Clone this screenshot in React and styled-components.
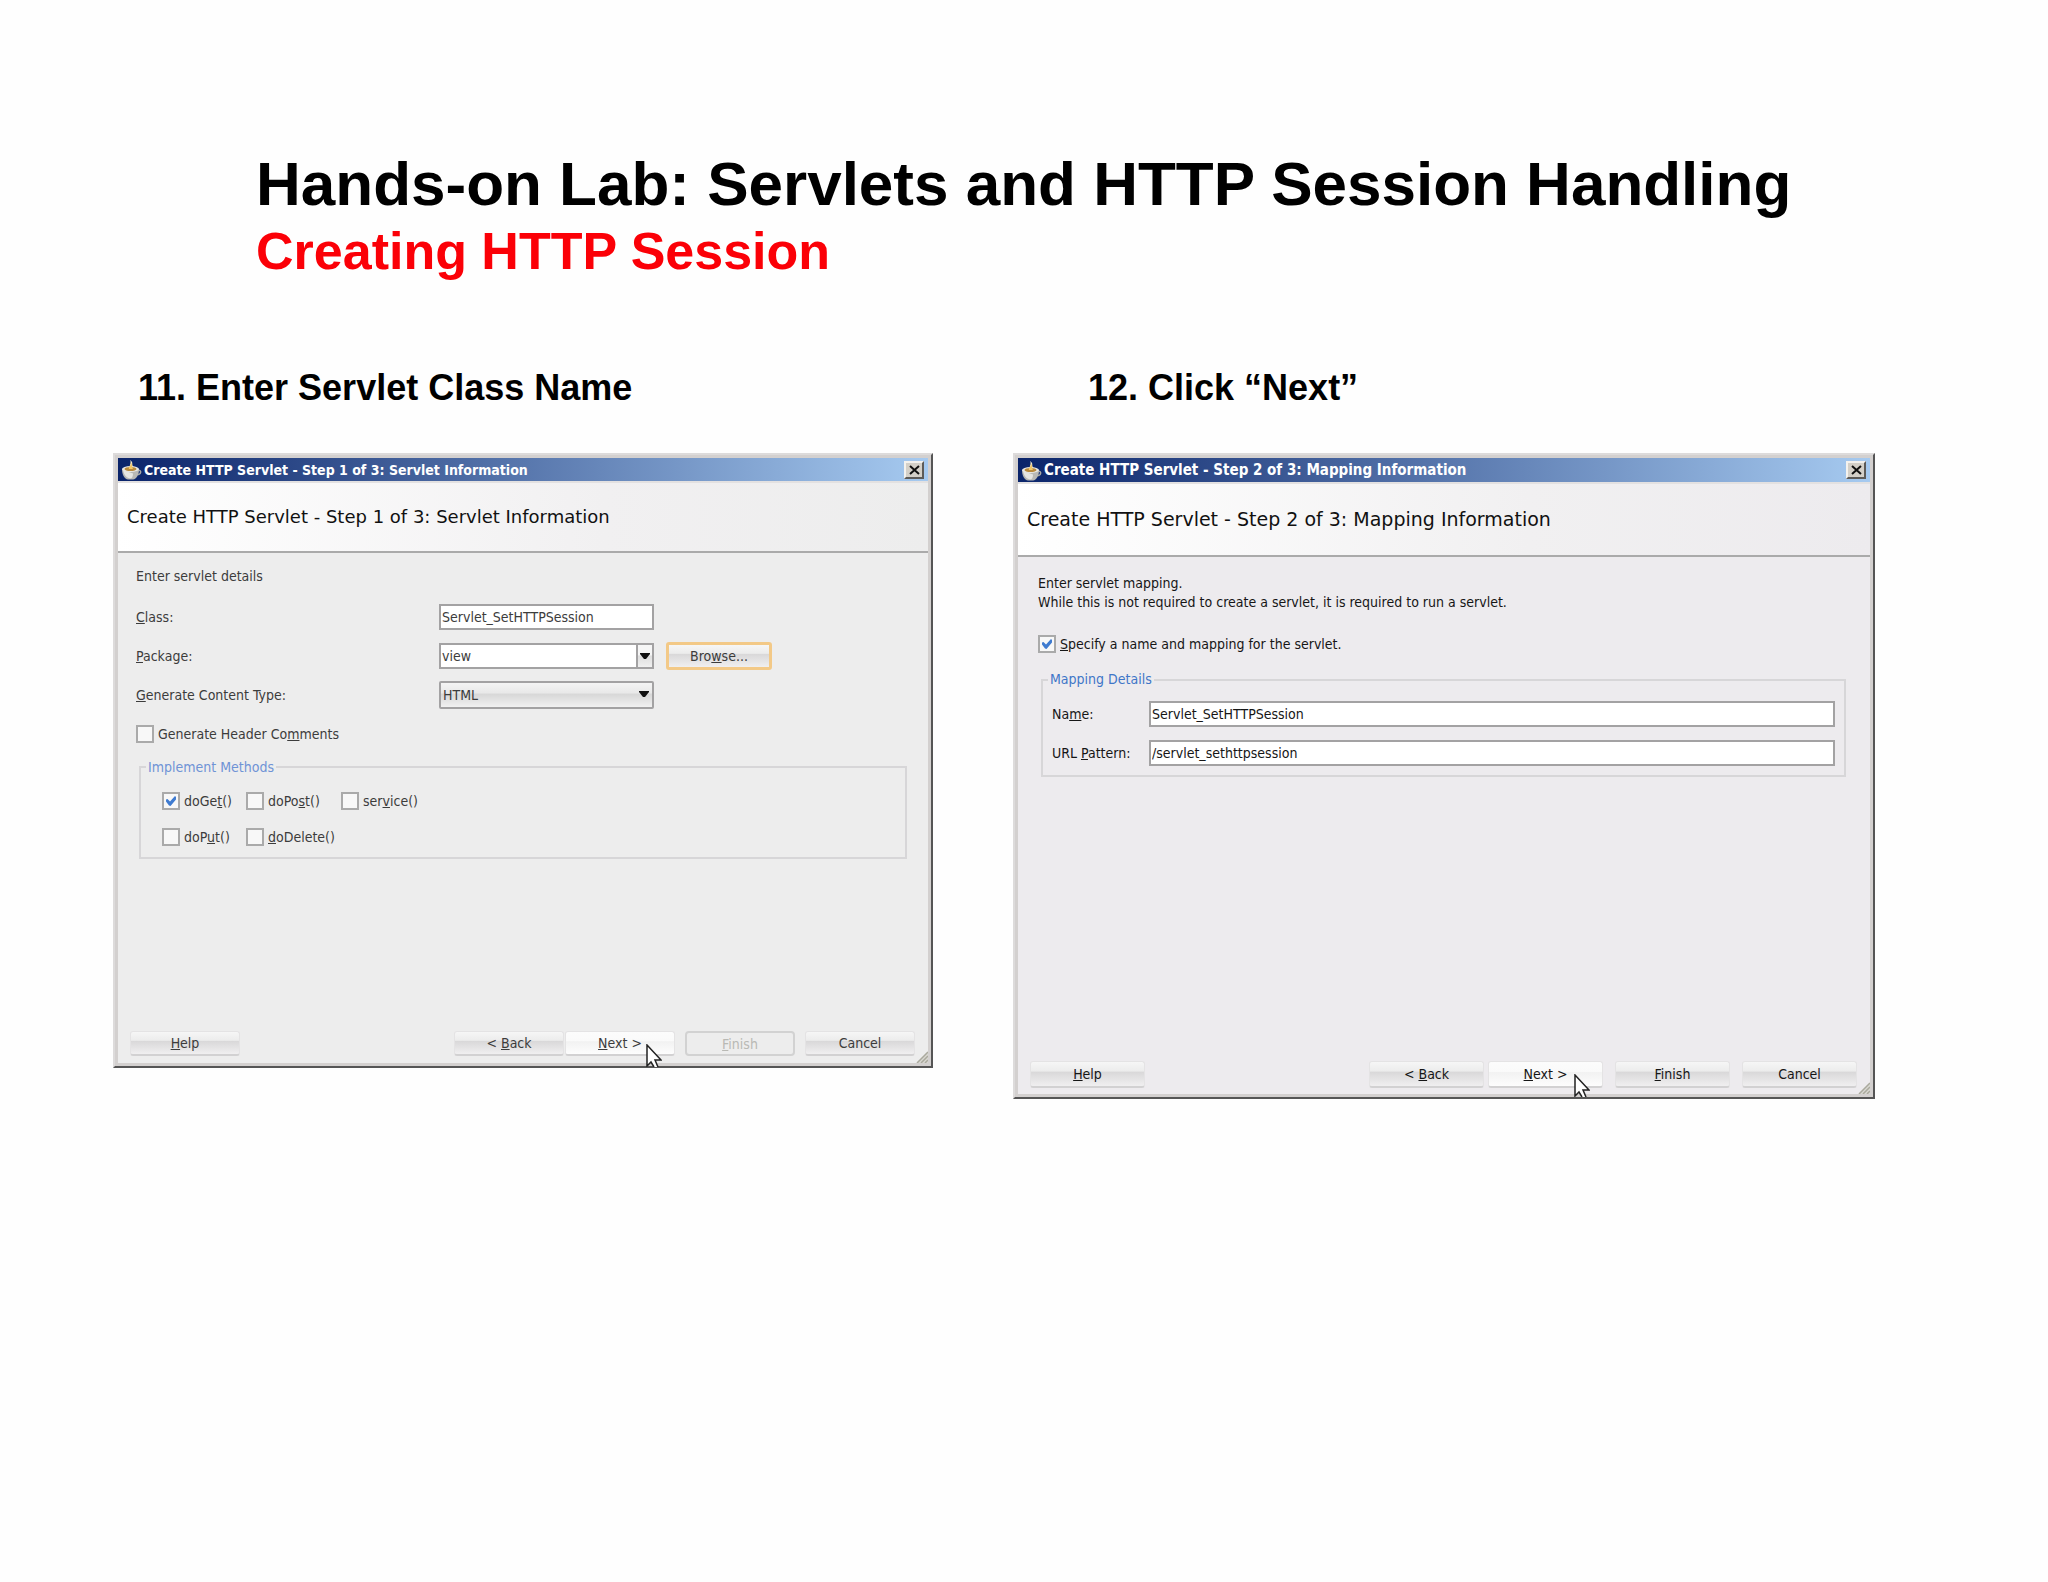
import { useId, useState } from 'react';
import styled, { createGlobalStyle, css } from 'styled-components';

const GlobalStyle = createGlobalStyle`
	* {
		box-sizing: border-box;
	}

	body {
		margin: 0;
		color: #000;
		background: #fefefe;
		font-family: "Liberation Sans", Arial, sans-serif;
	}
`;

//Slide
const StyledSlide = styled.main`
	padding: 147px 173px 147px 113px;
`;

const StyledHeading = styled.header`
	padding-left: 143px;
	margin-bottom: 86px;
`;

const StyledTitle = styled.h1`
	margin: 0;
	font-size: 62px;
	line-height: 74px;
	white-space: nowrap;
`;

const StyledSubtitle = styled.h2`
	margin: 0;
	font-size: 52px;
	line-height: 60px;
	color: #fb0007;
`;

const StyledColumns = styled.div`
	display: grid;
	grid-template-columns: 820fr 862fr;
	align-items: start;
	gap: 80px;
`;

const StyledCaption = styled.h3`
	margin: 0 0 44px;
	padding-left: ${ ({ $indent }) => $indent }px;
	font-size: 36px;
	line-height: 42px;
`;

//Window, both sizes of the dialog share these parts
const compact = css`
	--text: 14px;
	--line: 20px;
	--title: 14px;
	--heading: 18px;
	--bar: 23px;
	--banner: 72px;
	--ink: #3c3c3c;
	--legend: #6f93d6;
	--face: #ededed;
	--button-width: 110px;
	--button-height: 25px;
	min-height: 615px;
`;

const regular = css`
	--text: 14px;
	--line: 19px;
	--title: 15px;
	--heading: 19px;
	--bar: 24px;
	--banner: 75px;
	--ink: #161616;
	--legend: #3f76c8;
	--face: #edebee;
	--button-width: 115px;
	--button-height: 27px;
	min-height: 646px;
`;

const StyledWindow = styled.section`
	${ ({ $compact }) => ($compact ? compact : regular) }
	display: flex;
	flex-direction: column;
	position: relative;
	padding: 3px;
	border: 2px solid #dddbdb;
	border-right-color: #555;
	border-bottom-color: #555;
	background: #d3d0cf;
	color: var(--ink);
	font-family: "DejaVu Sans Condensed", "DejaVu Sans", sans-serif;
	font-size: var(--text);
	line-height: var(--line);
`;

const StyledTitleBar = styled.div`
	height: var(--bar);
	padding: 0 4px 0 3px;
	display: flex;
	align-items: center;
	gap: 2px;
	color: #fff;
	background: linear-gradient(to right, #0a246a, #a6caf0);
	font-size: var(--title);
	font-weight: bold;
`;

const StyledWindowName = styled.span`
	flex: 1;
	white-space: nowrap;
`;

const StyledClose = styled.button`
	width: 20px;
	height: 18px;
	padding: 0;
	display: flex;
	justify-content: center;
	align-items: center;
	border: 2px solid #f4f2ee;
	border-right-color: #5d5b58;
	border-bottom-color: #5d5b58;
	background: #d4d0c8;
`;

const StyledBanner = styled.h4`
	height: var(--banner);
	margin: 0;
	padding-left: 9px;
	display: flex;
	align-items: center;
	color: #111;
	background: linear-gradient(to right, #fff, #f1f0f1 60%, var(--face));
	border-top: 2px solid #e3e1e1;
	border-bottom: 2px solid #aaa;
	font-family: "DejaVu Sans", sans-serif;
	font-size: var(--heading);
	font-weight: normal;
`;

const StyledBody = styled.div`
	flex: 1;
	padding: ${ ({ $compact }) => ($compact ? '13px 21px 20px 18px' : '17px 24px 20px 20px') };
	background: var(--face);
`;

const StyledText = styled.p`
	margin: 0;
`;

const StyledFooter = styled.footer`
	display: flex;
	gap: ${ ({ $compact }) => ($compact ? 10 : 12) }px;
	padding: 0 13px ${ ({ $compact }) => ($compact ? 7 : 6) }px 12px;
	background: var(--face);
`;

const StyledPager = styled.div`
	margin-left: auto;
	display: flex;
	gap: ${ ({ $compact }) => ($compact ? 1 : 4) }px;
	position: relative;
`;

const StyledButton = styled.button`
	width: var(--button-width);
	height: var(--button-height);
	padding: 0;
	border: 1px solid #e4e3e4;
	border-bottom: 2px solid #d2d1d2;
	border-radius: 3px;
	color: inherit;
	background: linear-gradient(#f6f6f6, #ececec 38%, #d9d8d9 42%, #f0eff0);
	font: inherit;

	${ ({ $hot }) => $hot && css`
		background: linear-gradient(#fcfcfc, #fafafa 40%, #f2f2f2 44%, #fdfdfd);
	` }

	${ ({ $focused }) => $focused && css`
		width: 106px;
		height: 28px;
		border: 3px solid #f3c987;
	` }

	&:disabled {
		color: #b9b9b4;
		background: transparent;
		border: 2px solid #d2d2d2;
		border-radius: 4px;
	}
`;

const StyledPointer = styled.svg`
	position: absolute;
	right: 13px;
	top: 13px;
	pointer-events: none;
`;

const StyledGrip = styled.svg`
	position: absolute;
	right: 3px;
	bottom: 3px;
`;

//Form parts
const StyledServletForm = styled.div`
	margin: 17px 0 15px;
	display: grid;
	grid-template-columns: 303px 215px auto;
	grid-auto-rows: 28px;
	row-gap: 11px;
	align-items: center;
`;

const StyledMappingForm = styled.div`
	display: grid;
	grid-template-columns: 97px 1fr;
	row-gap: 13px;
	align-items: center;
`;

const StyledLabel = styled.label`
	grid-column: 1;
`;

const StyledInput = styled.input`
	width: 100%;
	height: 26px;
	padding: 0 1px;
	grid-column: 2;
	border: 2px solid #a3a2a3;
	border-radius: 0;
	color: inherit;
	background: #fff;
	font: inherit;
`;

const StyledCombo = styled.div`
	height: 26px;
	grid-column: 2;
	display: flex;
	border: 2px solid #a3a2a3;
	background: #fff;
`;

const StyledComboInput = styled.input`
	flex: 1;
	min-width: 0;
	padding: 0 1px;
	border: 0;
	color: inherit;
	background: transparent;
	font: inherit;
`;

const StyledComboButton = styled.button`
	width: 16px;
	padding: 0;
	display: flex;
	justify-content: center;
	align-items: center;
	border: 0;
	border-left: 2px solid #a3a2a3;
	background: linear-gradient(#f6f6f6 45%, #dedede 50%, #f0f0f0);
`;

const StyledSelectBox = styled.div`
	height: 28px;
	grid-column: 2;
	position: relative;

	svg {
		position: absolute;
		right: 5px;
		top: 10px;
		pointer-events: none;
	}
`;

const StyledSelect = styled.select`
	width: 100%;
	height: 100%;
	padding: 0 2px;
	appearance: none;
	border: 2px solid #a3a2a3;
	border-radius: 2px;
	color: inherit;
	background: linear-gradient(#f4f4f4, #e9e9e9 40%, #d8d8d8 48%, #f1f1f1);
	font: inherit;
`;

const StyledBrowse = styled.div`
	display: flex;
	padding-left: 12px;
`;

const StyledCheck = styled.label`
	height: 20px;
	display: flex;
	align-items: center;
	gap: 4px;
	white-space: nowrap;
`;

const StyledCheckbox = styled.input`
	width: 18px;
	height: 18px;
	margin: 0;
	display: grid;
	place-items: center;
	appearance: none;
	border: 2px solid #aaa;
	background: #f8f8f8;

	&:checked::after {
		content: "";
		width: 10px;
		height: 10px;
		background: #3f7bd0;
		clip-path: polygon(0 35%, 15% 30%, 40% 55%, 90% 0, 100% 10%, 100% 35%, 45% 100%, 30% 95%, 0 55%);
	}
`;

const StyledGroup = styled.fieldset`
	margin: ${ ({ $compact }) => ($compact ? '13px 0 0 3px' : '16px 0 0 3px') };
	padding: ${ ({ $compact }) => ($compact ? '14px 0 10px 21px' : '12px 9px 9px') };
	min-width: 0;
	border: 2px solid #d7d6d8;
`;

const StyledLegend = styled.legend`
	margin-left: ${ ({ $compact }) => ($compact ? -16 : -4) }px;
	padding: 0 2px;
	color: var(--legend);
`;

const StyledMethods = styled.div`
	display: grid;
	grid-template-columns: 84px 95px auto;
	row-gap: 16px;
`;

const StyledOptional = styled.div`
	margin-top: 22px;
`;

const CoffeeIcon = () => (
    <svg width="21" height="21" viewBox="0 0 21 21" aria-hidden="true">
        <path d="M9.500 8C7.500 6 11 5 9 1c4 2.500 1 4 3.500 7z" fill="#f2ead0"/>
        <path d="M17 11.500c4-1 3.500 4.500-1.500 4" fill="none" stroke="#a9a9a4" strokeWidth="1.500"/>
        <path d="M1 10h17c0 6-2.500 10-6 10.500H7C3.500 20 1 16 1 10z" fill="#b9b9b5"/>
        <path d="M2 11c1 5 3 7.500 7 8.500 2 0 3-2 3-5z" fill="#e6e6e2"/>
        <ellipse cx="9.500" cy="10" rx="8.500" ry="3" fill="#e9e9e5"/>
        <ellipse cx="9.500" cy="10" rx="6" ry="2" fill="#b98a3c"/>
        <path d="M8 10c-1-3 3-3 1.500-7 2.500 3 1 4 2.500 7z" fill="#f3c766"/>
    </svg>
);

const Arrow = () => (
    <svg width="10" height="6" viewBox="0 0 10 6" aria-hidden="true">
        <path d="M0 0h10v1L6 6H4L0 1z" fill="#111"/>
    </svg>
);

const Pointer = () => (
    <StyledPointer width="16" height="23" viewBox="0 0 16 23" aria-hidden="true">
        <path d="M1 1v21l4-4 3 5h4l-3-7h6z" fill="#fff"/>
        <path d="M8 23l-3-5-4 4V1l14 15H9l3 7" fill="none" stroke="#222" strokeWidth="1.500"/>
    </StyledPointer>
);

const Grip = () => (
    <StyledGrip width="12" height="12" viewBox="0 0 12 12" aria-hidden="true">
        <path d="M12 1v11H1z" fill="#d9d8d2"/>
        <path d="M1 12L12 1M5 12l7-7M9 12l3-3" stroke="#aaa99d" strokeWidth="1.500"/>
    </StyledGrip>
);

const Check = ({ children, defaultChecked = false }) => {
    const [isChecked, setIsChecked] = useState(defaultChecked);

    return (
        <StyledCheck>
            <StyledCheckbox type="checkbox" checked={ isChecked } onChange={ () => setIsChecked(v => !v) }/>
            <span>{ children }</span>
        </StyledCheck>
    );
};

const Dialog = ({ name, compact: isCompact, canFinish, children }) => (
    <StyledWindow $compact={ isCompact }>
        <StyledTitleBar>
            <CoffeeIcon/>
            <StyledWindowName>{ name }</StyledWindowName>
            <StyledClose type="button" aria-label="Close">
                <svg width="11" height="10" viewBox="0 0 11 10" aria-hidden="true">
                    <path d="M1 1l9 8M10 1L1 9" stroke="#111" strokeWidth="2"/>
                </svg>
            </StyledClose>
        </StyledTitleBar>

        <StyledBanner>{ name }</StyledBanner>

        <StyledBody $compact={ isCompact }>{ children }</StyledBody>

        <StyledFooter $compact={ isCompact }>
            <StyledButton type="button"><u>H</u>elp</StyledButton>

            <StyledPager $compact={ isCompact }>
                <StyledButton type="button">&lt; <u>B</u>ack</StyledButton>
                <StyledButton type="button" $hot><u>N</u>ext &gt;</StyledButton>
                <Pointer/>
            </StyledPager>

            <StyledButton type="button" disabled={ !canFinish }><u>F</u>inish</StyledButton>
            <StyledButton type="button">Cancel</StyledButton>
        </StyledFooter>

        <Grip/>
    </StyledWindow>
);

const ServletInformation = () => {
    const id = useId();

    return (
        <Dialog name="Create HTTP Servlet - Step 1 of 3: Servlet Information" compact>
            <StyledText>Enter servlet details</StyledText>

            <StyledServletForm>
                <StyledLabel htmlFor={ `${ id }class` }><u>C</u>lass:</StyledLabel>
                <StyledInput id={ `${ id }class` } defaultValue="Servlet_SetHTTPSession"/>

                <StyledLabel htmlFor={ `${ id }package` }><u>P</u>ackage:</StyledLabel>
                <StyledCombo>
                    <StyledComboInput id={ `${ id }package` } defaultValue="view"/>
                    <StyledComboButton type="button" aria-label="Show packages"><Arrow/></StyledComboButton>
                </StyledCombo>
                <StyledBrowse>
                    <StyledButton type="button" $focused>Bro<u>w</u>se...</StyledButton>
                </StyledBrowse>

                <StyledLabel htmlFor={ `${ id }type` }><u>G</u>enerate Content Type:</StyledLabel>
                <StyledSelectBox>
                    <StyledSelect id={ `${ id }type` }>
                        <option>HTML</option>
                    </StyledSelect>
                    <Arrow/>
                </StyledSelectBox>
            </StyledServletForm>

            <Check>Generate Header Co<u>m</u>ments</Check>

            <StyledGroup $compact>
                <StyledLegend $compact>Implement Methods</StyledLegend>
                <StyledMethods>
                    <Check defaultChecked>doGe<u>t</u>()</Check>
                    <Check>doPo<u>s</u>t()</Check>
                    <Check>ser<u>v</u>ice()</Check>
                    <Check>doP<u>u</u>t()</Check>
                    <Check><u>d</u>oDelete()</Check>
                </StyledMethods>
            </StyledGroup>
        </Dialog>
    );
};

const MappingInformation = () => {
    const id = useId();

    return (
        <Dialog name="Create HTTP Servlet - Step 2 of 3: Mapping Information" canFinish>
            <StyledText>Enter servlet mapping.</StyledText>
            <StyledText>While this is not required to create a servlet, it is required to run a servlet.</StyledText>

            <StyledOptional>
                <Check defaultChecked><u>S</u>pecify a name and mapping for the servlet.</Check>
            </StyledOptional>

            <StyledGroup>
                <StyledLegend>Mapping Details</StyledLegend>
                <StyledMappingForm>
                    <StyledLabel htmlFor={ `${ id }name` }>Na<u>m</u>e:</StyledLabel>
                    <StyledInput id={ `${ id }name` } defaultValue="Servlet_SetHTTPSession"/>

                    <StyledLabel htmlFor={ `${ id }url` }>URL <u>P</u>attern:</StyledLabel>
                    <StyledInput id={ `${ id }url` } defaultValue="/servlet_sethttpsession"/>
                </StyledMappingForm>
            </StyledGroup>
        </Dialog>
    );
};

const App = () => (
    <>
        <GlobalStyle/>

        <StyledSlide>
            <StyledHeading>
                <StyledTitle>Hands-on Lab: Servlets and HTTP Session Handling</StyledTitle>
                <StyledSubtitle>Creating HTTP Session</StyledSubtitle>
            </StyledHeading>

            <StyledColumns>
                <div>
                    <StyledCaption $indent={ 25 }>11. Enter Servlet Class Name</StyledCaption>
                    <ServletInformation/>
                </div>

                <div>
                    <StyledCaption $indent={ 75 }>12. Click “Next”</StyledCaption>
                    <MappingInformation/>
                </div>
            </StyledColumns>
        </StyledSlide>
    </>
);

export default App;
